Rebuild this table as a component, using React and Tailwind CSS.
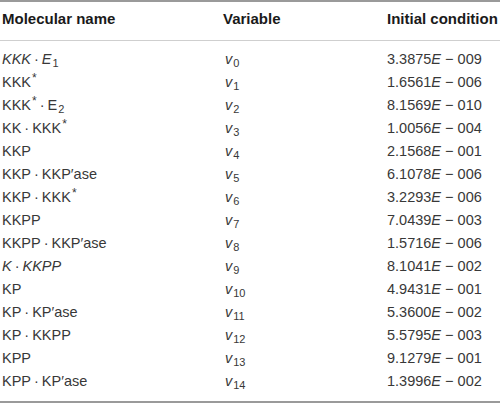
import React from "react";

const Sub = ({ children }) => (
  <span className="text-[11px] not-italic relative top-[3px] ml-[1px]">{children}</span>
);
const Sup = () => <span className="text-[12px] relative -top-[5px] ml-[1px]">*</span>;
const Dot = () => <span className="mx-[3px]">·</span>;

const rows = [
  [<><i>KKK</i><Dot /><i>E</i><Sub>1</Sub></>, "0", "3.3875", "009"],
  [<>KKK<Sup /></>, "1", "1.6561", "006"],
  [<>KKK<Sup /><Dot />E<Sub>2</Sub></>, "2", "8.1569", "010"],
  [<>KK<Dot />KKK<Sup /></>, "3", "1.0056", "004"],
  [<>KKP</>, "4", "2.1568", "001"],
  [<>KKP<Dot />KKP′ase</>, "5", "6.1078", "006"],
  [<>KKP<Dot />KKK<Sup /></>, "6", "3.2293", "006"],
  [<>KKPP</>, "7", "7.0439", "003"],
  [<>KKPP<Dot />KKP′ase</>, "8", "1.5716", "006"],
  [<><i>K</i><Dot /><i>KKPP</i></>, "9", "8.1041", "002"],
  [<>KP</>, "10", "4.9431", "001"],
  [<>KP<Dot />KP′ase</>, "11", "5.3600", "002"],
  [<>KP<Dot />KKPP</>, "12", "5.5795", "003"],
  [<>KPP</>, "13", "9.1279", "001"],
  [<>KPP<Dot />KP′ase</>, "14", "1.3996", "002"],
];

export default function App() {
  return (
    <div
      className="w-[500px] h-[405px] bg-white text-[#383838]"
      style={{ fontFamily: '"Liberation Sans", Arial, sans-serif' }}
    >
      <div className="border-t-2 border-b border-t-[#9a9a9a] border-b-[#cfcfcf] h-[41px] grid grid-cols-[221px_164px_1fr] items-center pl-[2px] text-[15px] font-bold text-[#1a1a1a] pb-[3px]">
        <div>Molecular name</div>
        <div>Variable</div>
        <div>Initial condition</div>
      </div>
      <div className="pt-[7px] h-[362px] border-b-2 border-b-[#9a9a9a] text-[14.5px]">
        {rows.map((r, i) => (
          <div
            key={i}
            className="grid grid-cols-[221px_164px_1fr] h-[23px] items-center pl-[2px] leading-none"
          >
            <div className="whitespace-nowrap">{r[0]}</div>
            <div className="pl-[2px] whitespace-nowrap">
              <i>v</i>
              <Sub>{r[1]}</Sub>
            </div>
            <div className="whitespace-nowrap">
              {r[2]}
              <i>E</i> − {r[3]}
            </div>
          </div>
        ))}
      </div>
    </div>
  );
}
